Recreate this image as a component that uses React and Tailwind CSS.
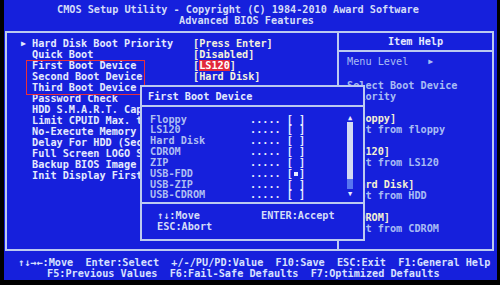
import React from 'react';

const items = [
  { label: 'Hard Disk Boot Priority', value: '[Press Enter]', arrow: true },
  { label: 'Quick Boot', value: '[Disabled]' },
  { label: 'First Boot Device', value: 'LS120', highlight: true },
  { label: 'Second Boot Device', value: '[Hard Disk]' },
  { label: 'Third Boot Device', value: '' },
  { label: 'Password Check', value: '' },
  { label: 'HDD S.M.A.R.T. Capability', value: '' },
  { label: 'Limit CPUID Max. to 3', value: '' },
  { label: 'No-Execute Memory Protect', value: '' },
  { label: 'Delay For HDD (Secs)', value: '' },
  { label: 'Full Screen LOGO Show', value: '' },
  { label: 'Backup BIOS Image to HDD', value: '' },
  { label: 'Init Display First', value: '' },
];

const devices = ['Floppy', 'LS120', 'Hard Disk', 'CDROM', 'ZIP', 'USB-FDD', 'USB-ZIP', 'USB-CDROM'];

const help = [
  { text: 'Select Boot Device', bold: false },
  { text: 'Priority', bold: false },
  { text: '', bold: false },
  { text: '[Floppy]', bold: true },
  { text: 'Boot from floppy', bold: false },
  { text: '', bold: false },
  { text: '[LS120]', bold: true },
  { text: 'Boot from LS120', bold: false },
  { text: '', bold: false },
  { text: '[Hard Disk]', bold: true },
  { text: 'Boot from HDD', bold: false },
  { text: '', bold: false },
  { text: '[CDROM]', bold: true },
  { text: 'Boot from CDROM', bold: false },
];

export default function App() {
  return (
    <div className="w-[500px] h-[285px] bg-black overflow-hidden font-['DejaVu_Sans_Mono',monospace] text-[10.2px] font-bold leading-[11px] whitespace-pre">
      <div className="ml-[4px] w-[493px] h-[280px] bg-[#1620dc]">
        {/* header */}
        <div className="pt-[4px] text-[#d4dcf8]">
          <div className="pl-[53px]">CMOS Setup Utility - Copyright (C) 1984-2010 Award Software</div>
          <div className="pl-[175px]">Advanced BIOS Features</div>
        </div>

        {/* main box */}
        <div className="relative mt-[5px] ml-[1px] w-[489px] h-[220px] border-2 border-[#bccaf0] flex">
          <div className="w-[330px] h-full pt-[4.5px] overflow-hidden">
            {items.map((it) => (
              <div key={it.label} className="flex h-[11px] pl-[14px]">
                <span className="w-[11px] text-[8px] text-[#e4eaff]">{it.arrow ? '▶' : ''}</span>
                <span className="w-[161px] text-[#e4eaff]">{it.label}</span>
                {it.highlight ? (
                  <span className="text-[#f4f2dc]">
                    [<span className="bg-[#e2283c] text-white">{it.value}</span>]
                  </span>
                ) : (
                  <span className="text-[#f4f2dc]">{it.value}</span>
                )}
              </div>
            ))}
          </div>

          <div className="flex-1 h-full border-l-2 border-[#bccaf0]">
            <div className="h-[19px] flex items-center justify-center border-b-2 border-[#bccaf0] text-[#e4eaff]">Item Help</div>
            <div className="pt-[3.5px] pl-[8px] flex text-[#a8bcf4] font-normal">
              <span>Menu Level</span>
              <span className="ml-[20px] text-[8px]">▶</span>
            </div>
            <div className="mt-[13px] pl-[8px]">
              {help.map((h, i) => (
                <div key={i} className={h.bold ? 'h-[11px] text-[#f4f0d4]' : 'h-[11px] text-[#a8bcf4]'}>{h.text}</div>
              ))}
            </div>
          </div>

          {/* red selection frame */}
          <div className="absolute left-[19px] top-[27px] w-[119px] h-[35px] border border-[#e8303c]" />

          {/* popup */}
          <div className="absolute left-[133px] top-[52px] w-[225px] h-[156px] bg-[#1620dc] border-2 border-[#bccaf0] flex flex-col">
            <div className="h-[20px] flex items-center pl-[6px] border-b-2 border-[#bccaf0] text-[#e4eaff]">First Boot Device</div>
            <div className="h-[97px] flex border-b-2 border-[#bccaf0]">
              <div className="pt-[6.5px] pl-[8px]">
                {devices.map((d) => (
                  <div key={d} className="flex h-[10.85px]">
                    <span className="w-[100px] text-[#aebef2]">{d}</span>
                    <span className="text-[#e8ecff]">..... [{d === 'USB-FDD' ? <span className="inline-block w-[6.1px] text-center"><span className="inline-block w-[4px] h-[4px] bg-[#e8ecff] align-middle" /></span> : ' '}]</span>
                  </div>
                ))}
              </div>
              <div className="ml-[42px] pt-[7px] w-[6px] flex flex-col items-center text-[#e8ecff]">
                <span className="text-[7px] leading-[8px]">▲</span>
                <div className="w-[6px] h-[57px] bg-[#d4dcf2]" />
                <div className="w-[6px] h-[10px] bg-[#5876f0]" />
                <span className="text-[7px] leading-[8px] mt-[1px]">▼</span>
              </div>
            </div>
            <div className="pt-[5.5px] pl-[15px] text-[#d4dcf8]">
              <div className="flex">
                <span className="w-[104px]">↑↓:Move</span>
                <span>ENTER:Accept</span>
              </div>
              <div>ESC:Abort</div>
            </div>
          </div>
        </div>

        {/* footer */}
        <div className="mt-[5.5px] text-[#d8e0ff]">
          <div className="pl-[14px]">↑↓→←:Move  Enter:Select  +/-/PU/PD:Value  F10:Save  ESC:Exit  F1:General Help</div>
          <div className="pl-[43px]">F5:Previous Values  F6:Fail-Safe Defaults  F7:Optimized Defaults</div>
        </div>
      </div>
    </div>
  );
}
